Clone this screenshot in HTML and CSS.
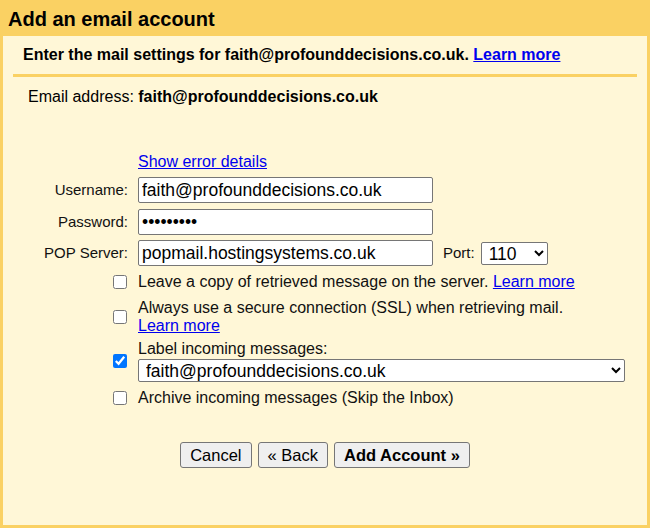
FILE: index.html
```html
<!DOCTYPE html>
<html>
<head>
<meta charset="utf-8">
<title>Add an email account</title>
<link rel="stylesheet" href="styles.css">
</head>
<body>
<div class="dialog">
  <div class="title">Add an email account</div>
  <div class="panel">
    <div class="intro">Enter the mail settings for faith@profounddecisions.co.uk. <a href="#" class="link">Learn more</a></div>
    <div class="divider"></div>
    <div class="email-line">Email address: <b>faith@profounddecisions.co.uk</b></div>

    <div class="row err">
      <div class="row-label"></div>
      <a href="#" class="link">Show error details</a>
    </div>
    <div class="row field first">
      <label class="row-label">Username:</label>
      <input class="text-input" type="text" value="faith@profounddecisions.co.uk">
    </div>
    <div class="row field">
      <label class="row-label">Password:</label>
      <input class="text-input" type="password" value="123456789">
    </div>
    <div class="row field pop">
      <label class="row-label">POP Server:</label>
      <input class="text-input" type="text" value="popmail.hostingsystems.co.uk">
      <span class="port-label">Port:</span>
      <select class="select port-select"><option>110</option><option>995</option></select>
    </div>

    <div class="row cb leave">
      <div class="row-label"><input type="checkbox" class="check"></div>
      <div class="cb-text">Leave a copy of retrieved message on the server. <a href="#" class="link">Learn more</a></div>
    </div>
    <div class="row cb ssl">
      <div class="row-label"><input type="checkbox" class="check"></div>
      <div class="cb-text">Always use a secure connection (SSL) when retrieving mail.<br><a href="#" class="link">Learn more</a></div>
    </div>
    <div class="row cb labelrow">
      <div class="row-label"><input type="checkbox" class="check" checked></div>
      <div class="cb-text grow">Label incoming messages:
        <select class="select label-select"><option>faith@profounddecisions.co.uk</option></select>
      </div>
    </div>
    <div class="row cb archive">
      <div class="row-label"><input type="checkbox" class="check"></div>
      <div class="cb-text">Archive incoming messages (Skip the Inbox)</div>
    </div>

    <div class="buttons">
      <button class="btn">Cancel</button>
      <button class="btn">« Back</button>
      <button class="btn primary">Add Account »</button>
    </div>
  </div>
</div>
</body>
</html>
```
FILE: styles.css
```css
html, body {
  margin: 0;
  padding: 0;
}
body {
  font-family: "Liberation Sans", Arial, sans-serif;
  color: #000;
  background: #fad163;
}
.dialog {
  width: 650px;
  height: 528px;
  box-sizing: border-box;
  background: #fad163;
  padding: 0 3px 3px 3px;
  display: flex;
  flex-direction: column;
}
.title {
  height: 36px;
  box-sizing: border-box;
  padding: 2px 0 0 5px;
  line-height: 34px;
  font-size: 20px;
  font-weight: bold;
}
.panel {
  flex: 1;
  background: #fff7d7;
  display: flex;
  flex-direction: column;
}
.link {
  color: #0000ee;
  text-decoration: underline;
}
.intro {
  padding: 10px 0 10px 20px;
  font-size: 16px;
  line-height: 18px;
  font-weight: bold;
}
.divider {
  height: 3px;
  background: #fad163;
  margin: 0 10px;
}
.email-line {
  padding: 11px 0 0 25px;
  font-size: 16px;
  line-height: 18px;
}
.row {
  display: flex;
  align-items: center;
  font-size: 16px;
  line-height: 18px;
}
.row-label {
  width: 125px;
  flex: none;
  margin-right: 10px;
  text-align: right;
  font-size: 15px;
  display: flex;
  justify-content: flex-end;
  color: #111;
}
.row.err {
  margin-top: 47px;
}
.row.field {
  margin-top: 6px;
}
.row.field.pop {
  margin-top: 5px;
}
.text-input {
  width: 295px;
  height: 26px;
  box-sizing: border-box;
  margin: 0;
  border: 1px solid #767676;
  border-radius: 2px;
  padding: 0 3px;
  font-family: "Liberation Sans", Arial, sans-serif;
  font-size: 17.5px;
  background: #fff;
  color: #000;
}
.port-label {
  margin-left: 10px;
  margin-right: 6px;
  font-size: 15px;
  color: #111;
}
.select {
  height: 23px;
  box-sizing: border-box;
  margin: 0;
  border: 1px solid #767676;
  border-radius: 2px;
  font-family: "Liberation Sans", Arial, sans-serif;
  font-size: 17.5px;
  background: #fff;
  color: #000;
  padding: 0 0 0 3px;
}
.port-select {
  width: 67px;
}
.label-select {
  display: block;
  width: 487px;
  margin-top: 1px;
}
.check {
  width: 14px;
  height: 14px;
  margin: 0 1px 0 0;
}
.row.cb.leave {
  margin-top: 7px;
}
.row.cb.ssl {
  margin-top: 8px;
}
.row.cb.labelrow {
  margin-top: 5px;
}
.row.cb.archive {
  margin-top: 7px;
}
.cb-text {
  color: #111;
}
.buttons {
  margin-top: 35px;
  display: flex;
  justify-content: center;
  gap: 6px;
}
.btn {
  height: 26px;
  box-sizing: border-box;
  margin: 0;
  padding: 0 9px;
  border: 1px solid #767676;
  border-radius: 3px;
  background: #efefef;
  font-family: "Liberation Sans", Arial, sans-serif;
  font-size: 16.5px;
  color: #000;
}
.btn.primary {
  font-weight: bold;
}
```
